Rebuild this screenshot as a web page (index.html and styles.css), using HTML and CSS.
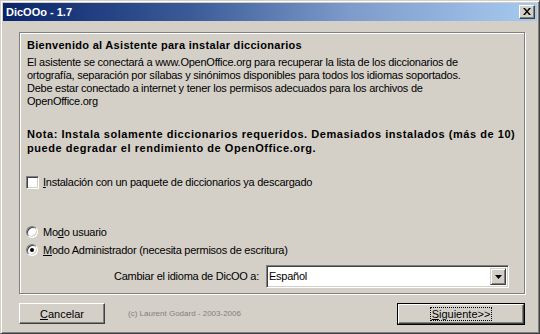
FILE: index.html
```html
<!DOCTYPE html>
<html lang="es">
<head>
    <meta charset="UTF-8">
    <title>DicOOo - 1.7</title>
    <link rel="stylesheet" href="styles.css">
</head>
<body>
    <div class="window">
        <div class="titlebar">
            <span class="title">DicOOo - 1.7</span>
            <button class="close-btn" aria-label="Cerrar">
                <svg width="8" height="7" viewBox="0 0 8 7"><path d="M0 0h2l2 2.5 2-2.5h2l-3 3.5 3 3.5h-2l-2-2.5-2 2.5h-2l3-3.5z" fill="#000"/></svg>
            </button>
        </div>
        <div class="body">
            <div class="panel">
                <div class="heading">Bienvenido al Asistente para instalar diccionarios</div>
                <p class="intro">El asistente se conectará a www.OpenOffice.org para recuperar la lista de los diccionarios de<br>ortografía, separación por sílabas y sinónimos disponibles para todos los idiomas soportados.<br>Debe estar conectado a internet y tener los permisos adecuados para los archivos de<br>OpenOffice.org</p>
                <p class="note">Nota: Instala solamente diccionarios requeridos. Demasiados instalados (más de 10)<br>puede degradar el rendimiento de OpenOffice.org.</p>
                <label class="check-row"><span class="checkbox"></span><span><u>I</u>nstalación con un paquete de diccionarios ya descargado</span></label>
                <div class="modes">
                    <label class="radio-row"><span class="radio"></span><span>Mo<u>d</u>o usuario</span></label>
                    <label class="radio-row"><span class="radio checked"></span><span><u>M</u>odo Administrador (necesita permisos de escritura)</span></label>
                </div>
                <div class="lang-row">
                    <span class="lang-label">Cambiar el idioma de DicOO a:</span>
                    <div class="select">
                        <span class="select-value">Español</span>
                        <span class="select-arrow"><svg width="7" height="4" viewBox="0 0 7 4"><path d="M0 0h7l-3.5 4z" fill="#000"/></svg></span>
                    </div>
                </div>
            </div>
            <div class="footer">
                <button class="btn cancel-btn"><u>C</u>ancelar</button>
                <span class="copyright">(c) Laurent Godard - 2003-2006</span>
                <button class="btn next-btn"><span class="focus-rect"><u>S</u>iguiente&gt;&gt;</span></button>
            </div>
        </div>
    </div>
</body>
</html>
```

FILE: styles.css
```css
:root {
    --face: #d4d0c8;
    --shadow: #808080;
    --dark: #404040;
    --light: #ffffff;
}
* { margin: 0; padding: 0; box-sizing: border-box; }
body { background: var(--face); font-family: 'Liberation Sans', Arial, sans-serif; font-size: 11px; color: #000; }
u { text-decoration: underline; text-underline-offset: 1px; }

.window { width: 540px; height: 334px; background: var(--face); border: 1px solid; border-color: var(--face) var(--dark) var(--dark) var(--face); box-shadow: inset 1px 1px 0 var(--light), inset -1px -1px 0 var(--shadow); padding: 2px; display: flex; flex-direction: column; }

.titlebar { height: 18px; background: linear-gradient(to right, #0a246a 0%, #3a5b98 35%, #7d9bcb 65%, #a6caf0 100%); display: flex; align-items: center; justify-content: space-between; padding: 0 2px 0 2px; }
.title { color: #fff; font-weight: bold; font-size: 11px; padding-left: 1px; }
.close-btn { width: 16px; height: 14px; background: var(--face); border: 1px solid; border-color: var(--light) var(--dark) var(--dark) var(--light); box-shadow: inset -1px -1px 0 var(--shadow); display: flex; align-items: center; justify-content: center; padding: 0 0 1px 0; }

.body { flex: 1; padding: 11px 0 0 16px; display: flex; flex-direction: column; }

.panel { width: 506px; height: 262px; border: 1px solid var(--shadow); box-shadow: 1px 1px 0 var(--light), inset 1px 1px 0 var(--light); padding: 6px 15px 5px 7px; display: flex; flex-direction: column; line-height: 13px; white-space: nowrap; letter-spacing: -0.25px; }
.heading { font-weight: bold; letter-spacing: 0.3px; }
.intro { margin-top: 4px; }
.note { margin-top: 19px; font-weight: bold; letter-spacing: 0.55px; line-height: 14px; }

.check-row { margin-top: 21px; margin-left: -1px; display: flex; align-items: center; gap: 4px; height: 14px; }
.checkbox { width: 13px; height: 13px; background: #fff; border: 1px solid; border-color: var(--shadow) var(--light) var(--light) var(--shadow); box-shadow: inset 1px 1px 0 var(--dark), inset -1px -1px 0 var(--face); }

.modes { margin-top: 36px; display: flex; flex-direction: column; gap: 4px; }
.radio-row { margin-left: -1px; display: flex; align-items: center; gap: 5px; height: 14px; }
.radio { width: 12px; height: 12px; border-radius: 50%; background: #fff; border: 1px solid; border-color: var(--shadow) var(--light) var(--light) var(--shadow); box-shadow: inset 1px 1px 0 var(--dark), inset -1px -1px 0 var(--face); display: flex; align-items: center; justify-content: center; }
.radio.checked::after { content: ''; width: 4px; height: 4px; border-radius: 50%; background: #000; }

.lang-row { margin-top: 8px; display: flex; align-items: center; justify-content: flex-end; gap: 7px; }
.select { width: 243px; height: 23px; background: #fff; border: 1px solid; border-color: var(--shadow) var(--light) var(--light) var(--shadow); box-shadow: inset 1px 1px 0 var(--dark), inset -1px -1px 0 var(--face); padding: 2px; display: flex; align-items: center; justify-content: space-between; }
.select-value { padding-left: 0; }
.select-arrow { width: 16px; height: 17px; background: var(--face); border: 1px solid; border-color: var(--face) var(--dark) var(--dark) var(--face); box-shadow: inset 1px 1px 0 var(--light), inset -1px -1px 0 var(--shadow); display: flex; align-items: center; justify-content: center; }

.footer { margin-top: 9px; display: flex; align-items: center; }
.btn { font-family: 'Liberation Sans', Arial, sans-serif; font-size: 11px; color: #000; background: var(--face); height: 21px; border: 1px solid; border-color: var(--light) var(--dark) var(--dark) var(--light); box-shadow: inset -1px -1px 0 var(--shadow); display: flex; align-items: center; justify-content: center; }
.cancel-btn { width: 86px; }
.copyright { margin-left: 23px; color: var(--shadow); font-size: 8px; flex: 1; }
.next-btn { width: 126px; height: 20px; margin-right: 13px; outline: 1px solid #000; outline-offset: 0; border-color: var(--light) var(--dark) var(--dark) var(--light); }
.focus-rect { border: 1px dotted #000; padding: 0 1px; line-height: 12px; }
```
